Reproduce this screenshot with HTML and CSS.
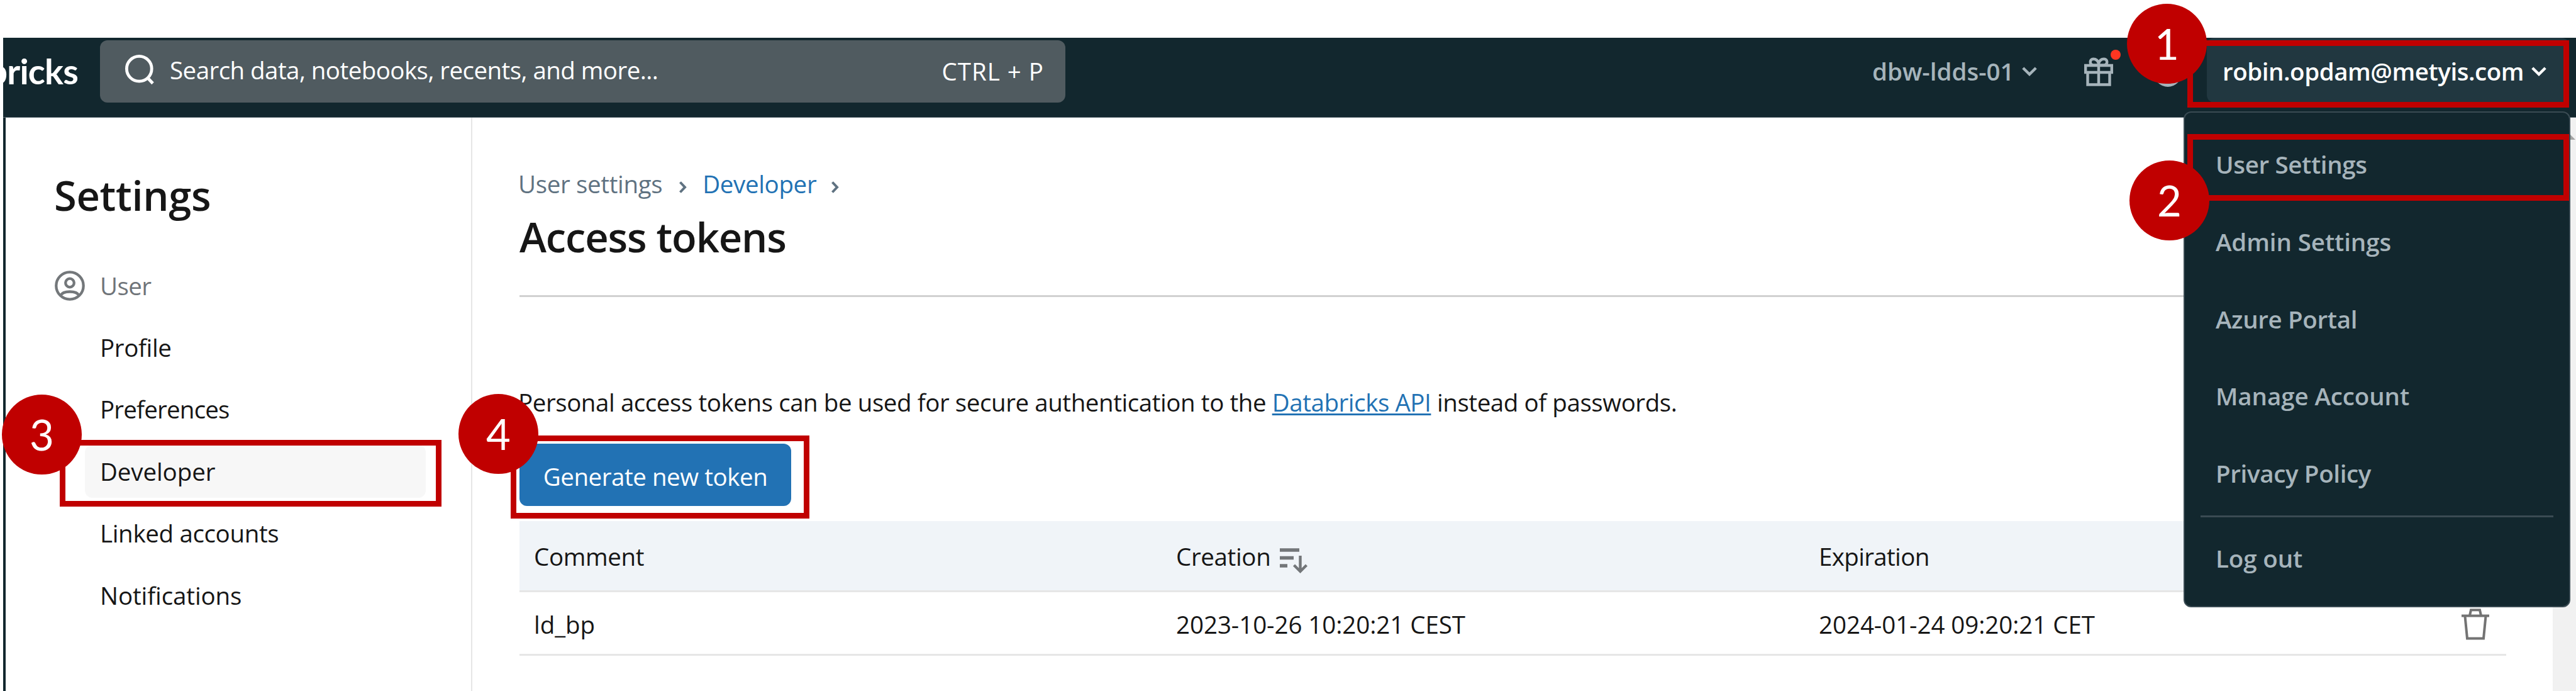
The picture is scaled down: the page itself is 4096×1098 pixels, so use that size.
FILE: index.html
```html
<!DOCTYPE html>
<html lang="en">
<head>
<meta charset="utf-8">
<title>Access tokens</title>
<link rel="stylesheet" href="styles.css">
</head>
<body>
<div class="page">
  <header class="topbar">
    <div class="brand"><span class="brand-name">bricks</span></div>
    <div class="search">
      <svg class="search-icon" viewBox="0 0 46 48" fill="none" stroke="#fff" stroke-width="4.8"><circle cx="22.3" cy="22.3" r="19.9"/><path d="M36 37 44 45.500"/></svg>
      <span class="search-text">Search data, notebooks, recents, and more...</span>
      <span class="shortcut">CTRL + P</span>
    </div>
    <div class="workspace"><span class="ws-name">dbw-ldds-01</span><svg class="chev" viewBox="0 0 24 15" fill="none" stroke="#a6b4bb" stroke-width="4.4"><path d="M1.8 2 12 12 22.2 2"/></svg></div>
    <div class="gift">
      <svg class="gift-icon" viewBox="0 0 46 46" fill="none" stroke="#a6b4bb" stroke-width="4.400"><path d="M2.200 13h41.600v11H2.200zM5.500 24V43.500h35V24M23 13v30M23 12.500H14C8 11 8.500 2.800 14.500 2.800 19.500 2.800 22 6 23 10 24 6 26.500 2.800 31.500 2.800 37.500 2.800 38 11 32 12.500z"/></svg>
      <span class="dot"></span>
    </div>
    <span class="help"></span>
    <div class="account"><span class="acct-name">robin.opdam@metyis.com</span><svg class="chev" viewBox="0 0 24 15" fill="none" stroke="#fff" stroke-width="4.400"><path d="M1.800 2 12 12 22.200 2"/></svg></div>
  </header>
  <div class="body">
    <nav class="sidebar">
      <h2 class="side-title">Settings</h2>
      <div class="side-group">
        <svg class="user-icon" viewBox="0 0 48 48" fill="none" stroke="#73777a" stroke-width="4.300"><circle cx="24" cy="24" r="21.700"/><circle cx="24" cy="19.500" r="6.800"/><path d="M9.500 39.500C13 31.500 35 31.500 38.500 39.500"/></svg>
        <span>User</span>
      </div>
      <a class="side-item">Profile</a>
      <a class="side-item tight">Preferences</a>
      <a class="side-item wide active">Developer</a>
      <a class="side-item">Linked accounts</a>
      <a class="side-item wide">Notifications</a>
    </nav>
    <main class="content">
      <div class="crumbs"><span>User settings</span><svg class="sep" viewBox="0 0 13 19" fill="none" stroke="#5f7281" stroke-width="4"><path d="M2.500 1.500 10 9.500 2.500 17.500"/></svg><a class="crumb-link">Developer</a><svg class="sep" viewBox="0 0 13 19" fill="none" stroke="#5f7281" stroke-width="4"><path d="M2.500 1.500 10 9.500 2.500 17.500"/></svg></div>
      <h1 class="title">Access tokens</h1>
      <p class="intro">Personal access tokens can be used for secure authentication to the <a class="link">Databricks API</a> instead of passwords.</p>
      <button class="generate">Generate new token</button>
      <div class="table">
        <div class="row head"><span>Comment</span><span class="sorted">Creation<svg class="sort-icon" viewBox="0 0 44 42" fill="none" stroke="#737679" stroke-width="5.500"><path d="M0 4H31M0 16.500H22M0 29H12"/><path stroke-width="4.400" d="M32.500 13V38M22.500 28 32.500 38 42.500 28"/></svg></span><span class="expires">Expiration</span></div>
        <div class="row"><span>ld_bp</span><span>2023-10-26 10:20:21 CEST</span><span>2024-01-24 09:20:21 CET</span>
          <svg class="trash" viewBox="0 0 44 50" fill="none" stroke="#737373" stroke-width="4"><path d="M0 11.500H44M5.500 12 9 47.500H35L38.500 12M13 11 15 2.200H29L31 11"/></svg></div>
      </div>
    </main>
    <div class="scrollbar"><span class="arrow"></span></div>
  </div>

  <div class="menu">
    <a class="menu-item">User Settings</a>
    <a class="menu-item wide">Admin Settings</a>
    <a class="menu-item">Azure Portal</a>
    <a class="menu-item wide">Manage Account</a>
    <a class="menu-item">Privacy Policy</a>
    <hr class="menu-rule">
    <a class="menu-item wide">Log out</a>
  </div>

  <span class="frame frame-1"></span><span class="frame frame-2"></span><span class="frame frame-3"></span><span class="frame frame-4"></span>
  <span class="badge badge-1">1</span><span class="badge badge-2">2</span><span class="badge badge-3">3</span><span class="badge badge-4">4</span>
</div>
</body>
</html>
```
FILE: styles.css
```css
* { box-sizing: border-box; }
body { margin: 0; background: #fff; font-family: "Open Sans", "Noto Sans", sans-serif; font-size: 38.5px; letter-spacing: -0.35px; color: #161616; }
svg { display: block; flex: none; }
h1, h2, p, hr { margin: 0; }
.page { position: relative; width: 4096px; height: 1098px; overflow: hidden; padding: 60px 0 0 5px; display: flex; flex-direction: column; }

/* Top bar */
.topbar { display: flex; align-items: flex-start; height: 127px; padding-top: 4px; background: #12272e; border-bottom: 1px solid #5b6a71; color: #a6b4bb; font-weight: 600; flex: none; }
.brand { width: 119px; height: 99px; margin-right: 35px; overflow: hidden; display: flex; justify-content: flex-end; }
.brand-name { font-family: Lato, sans-serif; font-weight: 700; font-size: 56px; line-height: 98px; letter-spacing: -0.8px; color: #fff; }
.search { display: flex; align-items: center; width: 1535px; height: 99px; padding: 0 34px 0 40px; border-radius: 12px; background: #505b60; color: #fff; font-weight: 400; }
.search-icon { width: 46px; height: 48px; margin: -5px 25px 0 0; }
.search-text { line-height: 93px; margin-top: -5px; letter-spacing: -0.55px; }
.shortcut { margin-left: auto; letter-spacing: 1px; }
.workspace { display: flex; align-items: center; height: 99px; margin-left: 1283px; width: 262px; }
.chev { width: 24px; height: 15px; margin-left: 12px; }
.ws-name, .acct-name, .shortcut { line-height: 99px; white-space: nowrap; }
.ws-name { letter-spacing: 0; }
.acct-name { letter-spacing: -0.45px; }
.gift { position: relative; width: 46px; margin: 27px 0 0 75px; }
.gift-icon { width: 46px; height: 46px; }
.dot { position: absolute; left: 42px; top: -12px; width: 16px; height: 16px; border-radius: 50%; background: #ff3621; }
.help { width: 44px; height: 44px; margin: 30px 0 0 65px; border: 5px solid #a6b4bb; border-radius: 50%; }
.account { display: flex; align-items: center; height: 103px; width: 576px; margin: -4px 0 0 40px; padding: 4px 0 0 25px; border-radius: 12px; background: #213740; color: #fff; }

/* Settings sidebar */
.body { display: flex; flex: 1; border-left: 4px solid #12272e; }
.sidebar { width: 742px; padding: 78px 0 0 77px; border-right: 2px solid #e6e6e6; flex: none; }
.side-title { font-size: 65px; line-height: 90px; font-weight: 600; letter-spacing: -0.3px; }
.side-group { display: flex; align-items: center; gap: 24px; height: 98px; margin: 50px 0 0 1px; color: #6f7479; letter-spacing: -0.6px; }
.user-icon { width: 48px; height: 48px; }
.side-item { display: block; height: 84px; margin: 0 72px 14.400px 49px; padding-left: 24px; line-height: 84px; border-radius: 12px; }
.side-group + .side-item { margin-top: 7px; }
.side-item.active { background: #f7f7f7; }
.side-item.tight { letter-spacing: -0.8px; }
.side-item.wide, .menu-item.wide { letter-spacing: -0.1px; }

/* Main column */
.content { width: 3234px; padding: 72px 0 0 75px; }
.crumbs { display: flex; align-items: center; height: 66px; margin-left: -2px; color: #5f7281; }
.sep { width: 13px; height: 19px; margin: 10px 25px 0 26px; }
.crumb-link { color: #2272b4; letter-spacing: -0.35px; }
.crumb-link + .sep { margin-left: 23px; }
.title { height: 147px; font-size: 65px; line-height: 102px; font-weight: 600; letter-spacing: -1.1px; border-bottom: 3px solid #d1d1d1; }
.intro { margin: 134px 0 0 -2px; line-height: 66px; letter-spacing: -0.43px; white-space: nowrap; }
.link { color: #2272b4; text-decoration: underline; text-decoration-thickness: 3px; text-underline-offset: 3px; }
.generate { display: block; width: 432px; height: 99px; margin-top: 33px; padding: 4px 0 0; border: 0; border-radius: 12px; background: #2272b4; color: #fff; font: inherit; letter-spacing: -0.45px; }
.table { margin-top: 24px; }
.row { display: grid; grid-template-columns: 1021px 1022px 1fr 44px; align-items: center; height: 101px; padding: 4px 27px 0 23px; border-bottom: 3px solid #e6e6e6; letter-spacing: -0.05px; }
.head { height: 113px; padding-top: 2px; background: #f0f4f8; letter-spacing: -0.35px; }
.expires { letter-spacing: -0.65px; }
.sorted { display: flex; align-items: center; gap: 15px; }
.sort-icon { width: 44px; height: 42px; margin: 7px 0 -7px; }
.trash { width: 44px; height: 50px; }
.scrollbar { width: 37px; margin-left: auto; background: #f1f1f1; padding: 18px 0 0 2px; }
.arrow { display: block; width: 0; border: 17px solid transparent; border-top: 0; border-bottom-color: #a3a3a3; }

/* Account menu */
.menu { position: absolute; left: 3472px; top: 177px; width: 615px; height: 788px; padding: 21px 0 0; border: 2px solid #3a4b53; border-radius: 12px; background: #12272e; color: #a6b4bb; font-weight: 600; }
.menu-item { display: block; height: 122.800px; padding-left: 49px; line-height: 122.800px; }
.menu-rule { height: 3px; margin: 5px 25px 4px; border: 0; background: #3a4b53; }

/* Numbered step markers */
.frame { position: absolute; border: 9.500px solid #c00000; }
.frame-1 { left: 3478px; top: 64px; width: 607px; height: 107px; }
.frame-2 { left: 3478px; top: 213px; width: 607px; height: 106px; }
.frame-3 { left: 95px; top: 699px; width: 607px; height: 106px; }
.frame-4 { left: 812px; top: 692px; width: 475px; height: 132px; }
.badge { position: absolute; width: 127px; height: 127px; border-radius: 50%; background: #c00000; color: #fff; font-family: Lato, sans-serif; font-size: 67px; line-height: 127px; text-align: center; letter-spacing: 0; }
.badge-1 { left: 3382px; top: 6px; }
.badge-2 { left: 3386px; top: 255px; }
.badge-3 { left: 3px; top: 627px; }
.badge-4 { left: 729px; top: 626px; }
```
